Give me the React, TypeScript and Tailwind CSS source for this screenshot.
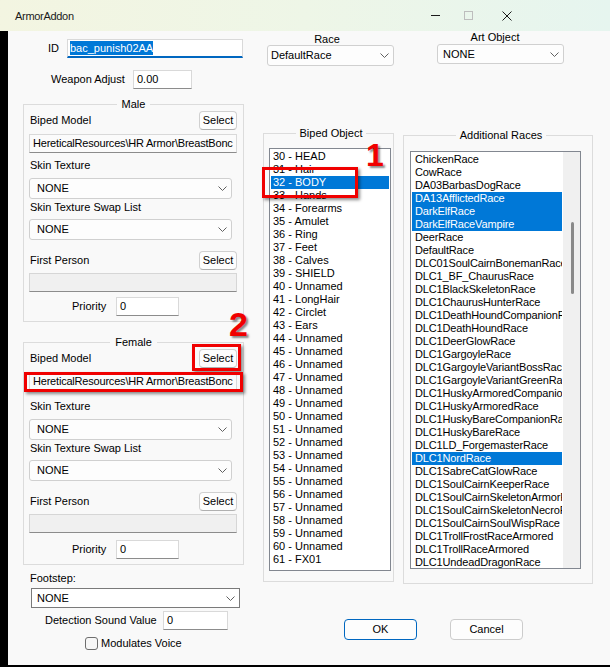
import React from "react";

const bipedItems: string[] = [
  "30 - HEAD",
  "31 - Hair",
  "32 - BODY",
  "33 - Hands",
  "34 - Forearms",
  "35 - Amulet",
  "36 - Ring",
  "37 - Feet",
  "38 - Calves",
  "39 - SHIELD",
  "40 - Unnamed",
  "41 - LongHair",
  "42 - Circlet",
  "43 - Ears",
  ...Array.from({ length: 17 }, (_, i) => `${44 + i} - Unnamed`),
  "61 - FX01",
];

const raceItems: string[] = [
  "ChickenRace",
  "CowRace",
  "DA03BarbasDogRace",
  "DA13AfflictedRace",
  "DarkElfRace",
  "DarkElfRaceVampire",
  "DeerRace",
  "DefaultRace",
  "DLC01SoulCairnBonemanRace",
  "DLC1_BF_ChaurusRace",
  "DLC1BlackSkeletonRace",
  "DLC1ChaurusHunterRace",
  "DLC1DeathHoundCompanionRace",
  "DLC1DeathHoundRace",
  "DLC1DeerGlowRace",
  "DLC1GargoyleRace",
  "DLC1GargoyleVariantBossRace",
  "DLC1GargoyleVariantGreenRace",
  "DLC1HuskyArmoredCompanionRace",
  "DLC1HuskyArmoredRace",
  "DLC1HuskyBareCompanionRace",
  "DLC1HuskyBareRace",
  "DLC1LD_ForgemasterRace",
  "DLC1NordRace",
  "DLC1SabreCatGlowRace",
  "DLC1SoulCairnKeeperRace",
  "DLC1SoulCairnSkeletonArmorRace",
  "DLC1SoulCairnSkeletonNecroRace",
  "DLC1SoulCairnSoulWispRace",
  "DLC1TrollFrostRaceArmored",
  "DLC1TrollRaceArmored",
  "DLC1UndeadDragonRace",
];

const selectedRaces = new Set(["DA13AfflictedRace", "DarkElfRace", "DarkElfRaceVampire", "DLC1NordRace"]);

function Chevron() {
  return (
    <svg width="9" height="5" viewBox="0 0 9 5" className="shrink-0">
      <path d="M0.5 0.5 L4.5 4.5 L8.5 0.5" fill="none" stroke="#606060" strokeWidth="1" />
    </svg>
  );
}

function SelectBtn() {
  return (
    <div className="h-[19px] w-[38px] shrink-0 bg-[#fdfdfd] border border-[#d0d0d0] border-b-[#b0b0b0] rounded-[4px] flex items-center justify-center">
      Select
    </div>
  );
}

function Group({ title, female }: { title: string; female?: boolean }) {
  return (
    <fieldset
      className={
        female
          ? "ml-[15px] w-[221px] min-w-0 mt-[14px] border border-[#dcdcdc] px-[5px] pb-[5px]"
          : "ml-[15px] w-[221px] min-w-0 mt-[9px] border border-[#dcdcdc] px-[5px] pb-[5px]"
      }
    >
      <legend className="mx-auto px-[5px] leading-[13px]">{title}</legend>
      <div className="flex items-center justify-between h-[19px] pl-[1px] pr-[1px]">
        <span>Biped Model</span>
        <SelectBtn />
      </div>
      <div className="mt-[4px] w-[208px] h-[19px] bg-[#fbfbfb] border border-[#d9d9d9] border-b-[#8c8c8c] flex items-center pl-[3px] overflow-hidden whitespace-nowrap tracking-[-0.2px]">
        HereticalResources\HR Armor\BreastBonc
      </div>
      <div className={female ? "mt-[9px] h-[13px] leading-[13px] pl-[1px]" : "mt-[6px] h-[13px] leading-[13px] pl-[1px]"}>
        Skin Texture
      </div>
      <div className="mt-[6px] w-[203px] h-[21px] bg-[#fdfdfd] border border-[#d0d0d0] rounded-[3px] flex items-center justify-between pl-[7px] pr-[4px]">
        <span>NONE</span>
        <Chevron />
      </div>
      <div className="mt-[2px] h-[13px] leading-[13px] pl-[1px]">Skin Texture Swap List</div>
      <div className="mt-[5px] w-[203px] h-[21px] bg-[#fdfdfd] border border-[#d0d0d0] rounded-[3px] flex items-center justify-between pl-[7px] pr-[4px]">
        <span>NONE</span>
        <Chevron />
      </div>
      <div className="mt-[11px] flex items-center justify-between h-[19px] pl-[1px] pr-[1px]">
        <span>First Person</span>
        <SelectBtn />
      </div>
      <div className="mt-[3px] w-[208px] h-[19px] bg-[#f0f0f0] border border-[#d6d6d6] border-b-[#8c8c8c]" />
      <div className={female ? "mt-[7px] flex items-center h-[19px]" : "mt-[5px] flex items-center h-[19px]"}>
        <span className="w-[87px] pl-[43px]">Priority</span>
        <div className="w-[63px] h-[19px] bg-white border border-[#d9d9d9] border-b-[#8c8c8c] flex items-center pl-[3px]">0</div>
      </div>
    </fieldset>
  );
}

function LeftColumn() {
  return (
    <div className="w-[247px] shrink-0 flex flex-col">
      <div className="mt-[8px] flex items-center h-[19px]">
        <span className="w-[59px] pl-[40px]">ID</span>
        <div className="w-[176px] h-[19px] bg-white border border-[#d9d9d9] border-b-2 border-b-[#0067c0] flex items-center pl-[2px]">
          <span className="bg-[#0078d7] text-white leading-[14px] h-[14px]">bac_punish02AA</span>
        </div>
      </div>
      <div className="mt-[12px] flex items-center h-[19px]">
        <span className="w-[125px] pl-[43px]">Weapon Adjust</span>
        <div className="w-[59px] h-[19px] bg-white border border-[#d9d9d9] border-b-[#8c8c8c] flex items-center pl-[3px]">0.00</div>
      </div>
      <Group title="Male" />
      <Group title="Female" female />
      <div className="mt-[7px] h-[13px] leading-[13px] pl-[22px]">Footstep:</div>
      <div className="mt-[3px] ml-[23px] w-[209px] h-[20px] bg-white border border-[#7a7a7a] flex items-center justify-between pl-[5px] pr-[4px]">
        <span>NONE</span>
        <Chevron />
      </div>
      <div className="mt-[3px] flex items-center h-[19px]">
        <span className="w-[155px] pl-[37px] whitespace-nowrap">Detection Sound Value</span>
        <div className="w-[65px] h-[19px] bg-white border border-[#d9d9d9] border-b-[#8c8c8c] flex items-center pl-[3px]">0</div>
      </div>
      <div className="mt-[7px] flex items-center h-[13px] ml-[77px]">
        <div className="w-[13px] h-[13px] rounded-[3px] border border-[#6e6e6e] bg-[#f7f7f7]" />
        <span className="ml-[3px] leading-[13px]">Modulates Voice</span>
      </div>
    </div>
  );
}

function RightArea() {
  return (
    <div className="w-[355px] flex flex-col">
      <div className="flex h-[35px]">
        <div className="ml-[12px] w-[127px] flex flex-col pt-[2px]">
          <div className="h-[12px] leading-[12px] text-center pr-[7px]">Race</div>
          <div className="h-[21px] bg-[#fdfdfd] border border-[#d0d0d0] rounded-[3px] flex items-center justify-between pl-[3px] pr-[4px]">
            <span>DefaultRace</span>
            <Chevron />
          </div>
        </div>
        <div className="ml-[43px] w-[127px] flex flex-col">
          <div className="h-[12px] leading-[12px] text-center pr-[11px]">Art Object</div>
          <div className="mt-[1px] h-[20px] bg-[#fdfdfd] border border-[#d0d0d0] rounded-[3px] flex items-center justify-between pl-[5px] pr-[4px]">
            <span>NONE</span>
            <Chevron />
          </div>
        </div>
      </div>
      <div className="flex items-start">
        <fieldset className="ml-[8px] w-[131px] min-w-0 mt-[61px] border border-[#dcdcdc] pl-[5px] pb-[10px]">
          <legend className="mx-auto px-[4px] leading-[13px]">Biped Object</legend>
          <div className="mt-[8px] w-[122px] h-[423px] bg-white border border-[#828790] pt-[1px] px-[1px] overflow-hidden">
            {bipedItems.map((t) => (
              <div
                key={t}
                className={
                  t === "32 - BODY"
                    ? "h-[13px] leading-[13px] pl-[2px] whitespace-nowrap bg-[#0078d7] text-white"
                    : "h-[13px] leading-[13px] pl-[2px] whitespace-nowrap"
                }
              >
                {t}
              </div>
            ))}
          </div>
        </fieldset>
        <fieldset className="ml-[9px] w-[190px] min-w-0 mt-[63px] border border-[#dcdcdc] pl-[6px] pb-[14px]">
          <legend className="mx-auto px-[4px] leading-[13px]">Additional Races</legend>
          <div className="mt-[9px] w-[171px] h-[418px] bg-white border border-[#828790] flex overflow-hidden">
            <div className="flex-1 min-w-0 pt-[1px] px-[1px] overflow-hidden tracking-[-0.15px]">
              {raceItems.map((t) => (
                <div
                  key={t}
                  className={
                    selectedRaces.has(t)
                      ? "h-[13px] leading-[13px] pl-[3px] whitespace-nowrap overflow-hidden bg-[#0078d7] text-white"
                      : "h-[13px] leading-[13px] pl-[3px] whitespace-nowrap overflow-hidden"
                  }
                >
                  {t}
                </div>
              ))}
            </div>
            <div className="w-[17px] shrink-0 bg-[#f0f0f0] flex justify-center">
              <div className="w-[3px] h-[72px] mt-[70px] ml-[1px] rounded-full bg-[#8a8a8a]" />
            </div>
          </div>
        </fieldset>
      </div>
      <div className="mt-[35px] flex">
        <div className="ml-[89px] w-[73px] h-[21px] bg-[#fdfdfd] border border-[#0067c0] rounded-[4px] flex items-center justify-center">
          OK
        </div>
        <div className="ml-[33px] w-[73px] h-[21px] bg-[#fdfdfd] border border-[#cccccc] rounded-[4px] flex items-center justify-center">
          Cancel
        </div>
      </div>
    </div>
  );
}

export default function App() {
  return (
    <div className="relative w-[610px] h-[667px] overflow-hidden bg-[#f9f9f9] text-[11px] text-black font-['Liberation_Sans',Arial,sans-serif] flex flex-col">
      <div className="h-[31px] shrink-0 flex items-center bg-linear-to-r from-[#f3f5e1] via-[#eef6e7] to-[#e6f5ef]">
        <span className="ml-[15px] mt-[1px] text-[11px] text-[#1a1a1a] tracking-[-0.3px]">ArmorAddon</span>
        <div className="ml-auto mr-[98px] flex items-center">
          <div className="w-[9px] h-[1px] bg-[#1a1a1a]" />
          <div className="ml-[24px] w-[9px] h-[9px] border border-[#bdbdbd]" />
          <svg className="ml-[29px]" width="10" height="10" viewBox="0 0 10 10">
            <path d="M0.5 0.5 L9.5 9.5 M9.5 0.5 L0.5 9.5" stroke="#1a1a1a" strokeWidth="1" />
          </svg>
        </div>
      </div>
      <div className="flex flex-1 min-h-0">
        <div className="w-[8px] bg-black shrink-0" />
        <LeftColumn />
        <RightArea />
      </div>
      <div className="h-[2px] bg-black shrink-0" />

      {/* annotation overlays */}
      <div className="absolute left-[262px] top-[167px] w-[96px] h-[31px] border-[3px] border-[#f00000] shadow-[2px_2px_3px_rgba(0,0,0,0.45)]" />
      <div className="absolute left-[192px] top-[344px] w-[49px] h-[27px] border-[3px] border-[#f00000] shadow-[2px_2px_3px_rgba(0,0,0,0.45)]" />
      <div className="absolute left-[24px] top-[372px] w-[219px] h-[20px] border-[3px] border-[#f00000] shadow-[2px_2px_3px_rgba(0,0,0,0.45)]" />
      <div className="absolute left-[366px] top-[139px] text-[32px] leading-[32px] font-bold text-[#f00000] [text-shadow:2px_2px_2px_rgba(0,0,0,0.45)]">
        1
      </div>
      <div className="absolute left-[229px] top-[307px] text-[34px] leading-[34px] font-bold text-[#f00000] [text-shadow:2px_2px_2px_rgba(0,0,0,0.45)]">
        2
      </div>
    </div>
  );
}
